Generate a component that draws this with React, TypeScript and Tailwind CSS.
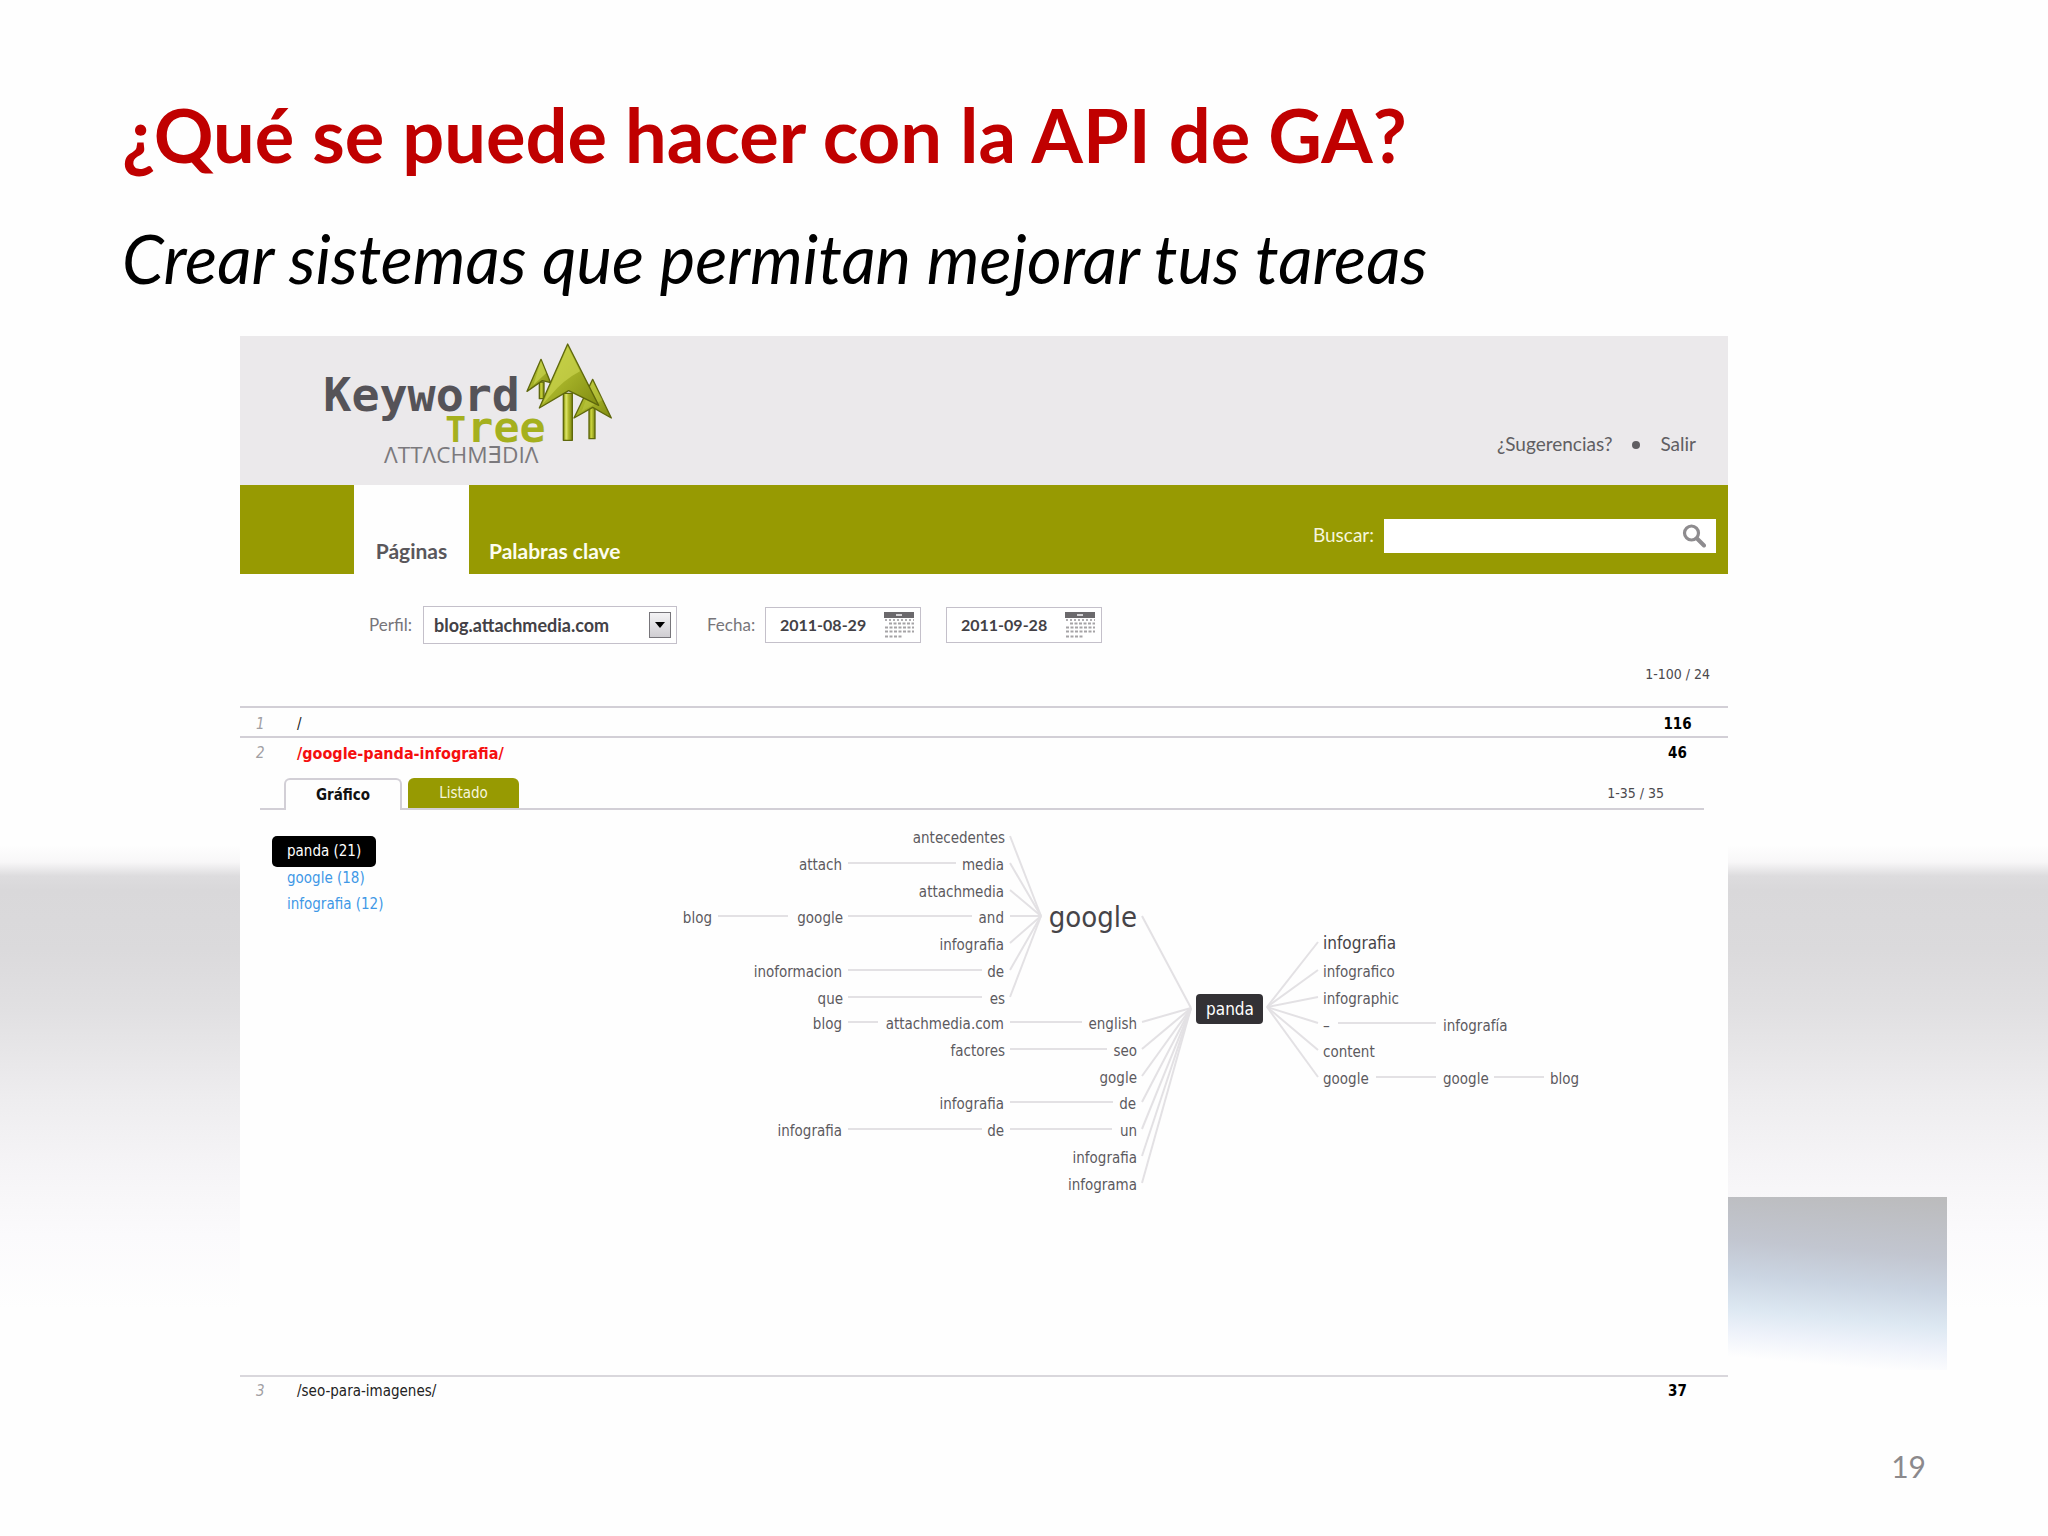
import React from "react";

type Line = [number, number, number, number];
type Node = [string, number, number];

// Tree words growing to the left of the root: label, right edge, baseline
const LEFT_NODES: Node[] = [
  ["antecedentes", 345, 23],
  ["attach", 182, 50],
  ["media", 344, 50],
  ["attachmedia", 344, 77],
  ["blog", 52, 103],
  ["google", 183, 103],
  ["and", 344, 103],
  ["infografia", 344, 130],
  ["inoformacion", 182, 157],
  ["de", 344, 157],
  ["que", 183, 184],
  ["es", 345, 184],
  ["blog", 182, 209],
  ["attachmedia.com", 344, 209],
  ["english", 477, 209],
  ["factores", 345, 236],
  ["seo", 477, 236],
  ["gogle", 477, 263],
  ["infografia", 344, 289],
  ["de", 476, 289],
  ["infografia", 182, 316],
  ["de", 344, 316],
  ["un", 477, 316],
  ["infografia", 477, 343],
  ["infograma", 477, 370],
];

// Tree words growing to the right: label, left edge, baseline
const RIGHT_NODES: Node[] = [
  ["infografico", 663, 157],
  ["infographic", 663, 184],
  ["–", 663, 211],
  ["infografía", 783, 211],
  ["content", 663, 237],
  ["google", 663, 264],
  ["google", 783, 264],
  ["blog", 890, 264],
];

const FLAT_LINES: Line[] = [
  [188, 43, 296, 43],
  [58, 96, 128, 96],
  [188, 96, 312, 96],
  [188, 150, 322, 150],
  [188, 177, 322, 177],
  [188, 202, 218, 202],
  [350, 202, 422, 202],
  [350, 229, 447, 229],
  [350, 282, 453, 282],
  [188, 309, 322, 309],
  [350, 309, 452, 309],
  [678, 203, 776, 203],
  [716, 257, 776, 257],
  [834, 257, 884, 257],
];

const FAN_GOOGLE = [16, 43, 70, 96, 123, 150, 177];
const FAN_LEFT = [96, 202, 229, 256, 282, 309, 336, 363];
const FAN_RIGHT = [122, 150, 177, 203, 230, 257];

function KeywordGraph() {
  return (
    <svg width="980" height="400" viewBox="0 0 980 400" role="img" aria-label="Árbol de palabras clave de panda" className="shrink-0 font-['DejaVu_Sans_Condensed','Noto_Sans',sans-serif]">
      <g stroke="#e3e1e4" strokeWidth="2" fill="none">
        {FLAT_LINES.map(([x1, y1, x2, y2], i) => (
          <line key={i} x1={x1} y1={y1} x2={x2} y2={y2} />
        ))}
        {FAN_GOOGLE.map((y) => (
          <line key={y} x1={350} y1={y} x2={381} y2={96} />
        ))}
        {FAN_LEFT.map((y) => (
          <line key={y} x1={482} y1={y} x2={531} y2={188} />
        ))}
        {FAN_RIGHT.map((y) => (
          <line key={y} x1={607} y1={187} x2={658} y2={y} />
        ))}
      </g>
      <g fontSize="15" fill="#5c5a5e">
        {LEFT_NODES.map(([label, x, y], i) => (
          <text key={i} x={x} y={y} textAnchor="end">{label}</text>
        ))}
        {RIGHT_NODES.map(([label, x, y], i) => (
          <text key={i} x={x} y={y}>{label}</text>
        ))}
      </g>
      <text x="477" y="107" textAnchor="end" fontSize="29" fill="#464448">google</text>
      <text x="663" y="129" fontSize="17" fill="#464448">infografia</text>
      <rect x="536" y="174" width="67" height="30" rx="4" fill="#333135" />
      <text x="570" y="195" textAnchor="middle" fontSize="17" fill="#ffffff">panda</text>
    </svg>
  );
}

function Logo() {
  return (
    <svg width="300" height="144" viewBox="60 18 900 432" role="img" aria-label="Keyword Tree Attachmedia">
      <defs>
        <linearGradient id="leaf" x1="0" y1="0" x2="1" y2="1">
          <stop offset="0" stopColor="#c3cf3f" />
          <stop offset="0.45" stopColor="#a9b52a" />
          <stop offset="1" stopColor="#7f8a10" />
        </linearGradient>
        <linearGradient id="trunk" x1="0" y1="0" x2="1" y2="0">
          <stop offset="0" stopColor="#8c9616" />
          <stop offset="0.4" stopColor="#c8d23c" />
          <stop offset="1" stopColor="#7c850f" />
        </linearGradient>
      </defs>
      <text x="70" y="242" fontSize="140" fontWeight="700" fill="#555358" className="font-['DejaVu_Sans_Mono',monospace]">Keyword</text>
      <text y="336" fontWeight="700" fill="#a5b01e" className="font-['DejaVu_Sans_Mono',monospace]">
        <tspan x="436" fontSize="104">T</tspan>
        <tspan x="502" fontSize="130">ree</tspan>
      </text>
      <text x="252" y="398" fontSize="68" fill="#7b797d" className="font-['Open_Sans','DejaVu_Sans',sans-serif]">ΛTTΛCHMƎDIΛ</text>
      <g strokeLinejoin="round" stroke="#5f680c" strokeWidth="4">
        <path d="M718 156h14v50h-14z" fill="url(#trunk)" />
        <path d="M723 88L752 158L727 152L681 184Z" fill="url(#leaf)" />
        <path d="M723 92L738 130L700 165Z" fill="#c9d44f" stroke="none" opacity="0.7" />
        <path d="M867 225h18v101h-18z" fill="url(#trunk)" />
        <path d="M878 148L934 264L878 232L822 264Z" fill="url(#leaf)" />
        <path d="M878 156L908 210L845 244Z" fill="#c9d44f" stroke="none" opacity="0.35" />
        <path d="M790 190h27v141h-27z" fill="url(#trunk)" />
        <path d="M803 42L896 226L806 182L718 234Z" fill="url(#leaf)" />
        <path d="M803 50L840 124Q790 150 752 196L728 222Z" fill="#ccd650" stroke="none" opacity="0.65" />
        <path d="M799 192L799 328" stroke="#d7df62" strokeWidth="6" />
      </g>
    </svg>
  );
}

function CalendarIcon() {
  const rows = [11, 15, 19, 23];
  return (
    <svg width="30" height="27" viewBox="0 0 30 27" aria-hidden="true" className="shrink-0">
      <rect width="30" height="6" fill="#6b696c" />
      <rect x="12" y="2" width="6" height="2" fill="#d5d3d6" />
      <path d="M1 8H30" stroke="#b0aeb1" strokeWidth="2" strokeDasharray="2 2" />
      {rows.map((y, i) => (
        <path key={y} d={i === 0 ? "M5 11.5H30" : i === 3 ? "M1 24.5H18" : `M1 ${y + 0.5}H30`} stroke="#a5a3a6" strokeWidth="2" strokeDasharray="3 1.5" />
      ))}
    </svg>
  );
}

function DateField({ label, value }: { label: string; value: string }) {
  return (
    <div className="flex h-9 w-[156px] items-center border border-[#c4c0ca] bg-white pr-1.5 pl-3.5">
      <input aria-label={label} defaultValue={value} className="w-full min-w-0 bg-transparent text-[16px] font-bold text-[#434146] outline-none" />
      <CalendarIcon />
    </div>
  );
}

function Detail() {
  return (
    <div className="font-['DejaVu_Sans_Condensed','Noto_Sans',sans-serif]">
      <div className="mr-6 ml-5 flex items-end border-b-2 border-[#d2cfd6] pl-6">
        <button className="-mb-0.5 h-8 w-[118px] rounded-t-md border-2 border-b-0 border-[#d2cfd6] bg-[#fefefe] text-[15px] font-bold text-[#111]">Gráfico</button>
        <button className="ml-1.5 h-[30px] w-[111px] rounded-t-md bg-[#979a02] text-[15px] text-[#f6f6dc]">Listado</button>
        <span className="ml-auto pr-10 pb-1 text-[14px] text-[#4b494d]">1-35 / 35</span>
      </div>
      <div className="flex h-[565px] pt-2.5 pl-8">
        <ul className="w-[388px] pt-4 text-[15px] leading-[26px] text-[#3f98e6]">
          <li><a href="#panda" className="inline-block rounded-[5px] bg-black px-[15px] leading-[31px] text-white">panda (21)</a></li>
          <li className="-mt-0.5 pl-[15px]"><a href="#google">google (18)</a></li>
          <li className="pl-[15px]"><a href="#infografia">infografia (12)</a></li>
        </ul>
        <KeywordGraph />
      </div>
    </div>
  );
}

function PagesTable() {
  return (
    <table className="w-full table-fixed border-collapse text-[15px] font-['DejaVu_Sans_Condensed','Noto_Sans',sans-serif]">
      <colgroup>
        <col className="w-[57px]" />
        <col />
        <col className="w-[101px]" />
      </colgroup>
      <tbody>
        <tr className="h-[29px] border-t-2 border-[#d2cfd6] leading-6">
          <td className="pt-1 pl-4 text-[#a19fa3] italic">1</td>
          <td className="pt-1 text-[#222]">/</td>
          <td className="pt-1 text-center font-bold text-black">116</td>
        </tr>
        <tr className="h-[41px] border-t-2 border-[#d2cfd6] align-top leading-[31px]">
          <td className="pl-4 text-[#a19fa3] italic">2</td>
          <td className="text-[16px] font-bold text-[#f50f0f]">/google-panda-infografia/</td>
          <td className="text-center font-bold text-black">46</td>
        </tr>
        <tr>
          <td colSpan={3}><Detail /></td>
        </tr>
        <tr className="h-[36px] border-t-2 border-[#d9d7dc] align-top leading-[28px]">
          <td className="pl-4 text-[#a19fa3] italic">3</td>
          <td className="text-[#222]">/seo-para-imagenes/</td>
          <td className="text-center font-bold text-black">37</td>
        </tr>
      </tbody>
    </table>
  );
}

export default function App() {
  return (
    <div className="min-h-screen bg-[#fefefe] bg-[linear-gradient(180deg,#fefefe_0px,#fefefe_845px,#f8f7f8_862px,#dddcde_876px,#d9d8da_890px,#dbdadc_950px,#e1e0e2_1010px,#eeedef_1100px,#f5f4f6_1165px,#fbfafc_1235px,#fefefe_1310px)] pt-[90px] font-['Lato',sans-serif]">
      <h1 className="pl-[122px] text-[74px] leading-[90px] font-bold text-[#c00000]">¿Qué se puede hacer con la API de GA?</h1>
      <p className="pt-[38px] pl-[122px] text-[67px] leading-[80px] text-black italic">Crear sistemas que permitan mejorar tus tareas</p>
      <main className="mt-[38px] flex items-end pr-[101px] pl-[240px]">
        <section className="min-w-0 flex-1 bg-[#fefefe] text-[19px]">
          <header className="flex justify-between bg-[#ebe9eb] pr-8 pl-20">
            <div className="h-[149px]"><Logo /></div>
            <nav className="flex items-center gap-5 pt-[68px] text-[#605e62]">
              <a href="#sugerencias">¿Sugerencias?</a>
              <span className="size-2 rounded-full bg-[#605e62]" />
              <a href="#salir">Salir</a>
            </nav>
          </header>
          <div className="flex h-[89px] items-stretch bg-[#979a02] pr-3 pl-[114px]">
            <button className="flex w-[115px] items-end justify-center bg-[#fefefe] pb-2 text-[21px] font-bold text-[#59575b]">Páginas</button>
            <button className="flex items-end pb-2 pl-5 text-[21px] font-bold text-[#fdfdf0]">Palabras clave</button>
            <div className="ml-auto flex items-center gap-2.5 pt-3">
              <label htmlFor="buscar" className="text-[#f6f6dc]">Buscar:</label>
              <div className="flex h-[34px] w-[332px] items-center bg-white pr-2.5">
                <input id="buscar" className="h-full min-w-0 flex-1 bg-transparent px-2 outline-none" />
                <button aria-label="Buscar">
                  <svg width="24" height="24" viewBox="0 0 24 24" fill="none" stroke="#8e8c8f" strokeLinecap="round" aria-hidden="true">
                    <circle cx="9.5" cy="9" r="7" strokeWidth="3.2" />
                    <path d="M15 14.5L22 21.5" strokeWidth="4" />
                  </svg>
                </button>
              </div>
            </div>
          </div>
          <form className="flex h-[90px] items-center pt-3 pl-[129px] text-[17px] text-[#77757a]">
            <label htmlFor="perfil" className="w-[54px]">Perfil:</label>
            <div className="relative h-[38px] w-[254px]">
              <select id="perfil" className="size-full appearance-none border border-[#c4c0ca] bg-white pl-2.5 text-[18px] font-bold text-[#434146]">
                <option>blog.attachmedia.com</option>
              </select>
              <span className="pointer-events-none absolute top-1.5 right-1.5 flex h-[26px] w-[22px] items-center justify-center border border-[#77757a] bg-linear-to-b from-[#f4f3f5] to-[#d0ced2]">
                <svg width="10" height="6" viewBox="0 0 10 6" aria-hidden="true"><path d="M0 0H10L5 6Z" fill="#000" /></svg>
              </span>
            </div>
            <span className="w-[88px] pl-[30px]">Fecha:</span>
            <DateField label="Fecha inicial" value="2011-08-29" />
            <span className="w-[25px]" />
            <DateField label="Fecha final" value="2011-09-28" />
          </form>
          <p className="h-[42px] pr-[18px] text-right text-[14px] leading-5 text-[#4b494d] font-['DejaVu_Sans_Condensed','Noto_Sans',sans-serif]">1-100 / 24</p>
          <PagesTable />
        </section>
        <div className="mb-[42px] h-[173px] w-[219px] bg-[linear-gradient(185deg,#bbbbbc_0%,#c2c6d0_32%,#cbd5e2_50%,#dde8f2_68%,#eef2fa_80%,#fefefe_93%)]" />
      </main>
      <footer className="pt-[34px] pr-[122px] text-right text-[30px] leading-[40px] text-[#8b898c]">19</footer>
    </div>
  );
}
